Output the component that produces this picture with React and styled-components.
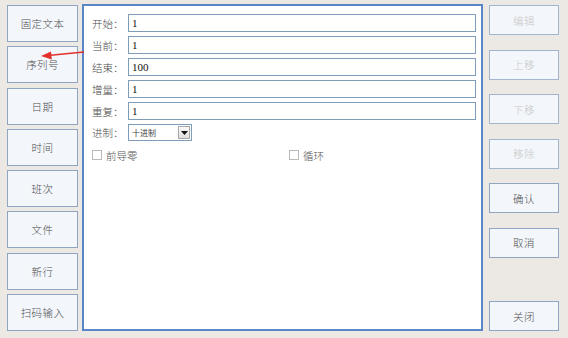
import React from "react";
import styled, { createGlobalStyle } from "styled-components";

const Global = createGlobalStyle`
  html, body { margin: 0; padding: 0; background: #ece9e4; }
  body { font-family: "Liberation Serif", "Noto Sans CJK SC", serif; }
  * { box-sizing: border-box; }
`;

const Page = styled.div`
  position: relative;
  width: 568px;
  height: 338px;
  display: flex;
  align-items: flex-start;
  padding: 5px 0 0 7px;
  background: #ece9e4;
`;

const LeftCol = styled.div`
  width: 71px;
  height: 326px;
  display: flex;
  flex-direction: column;
  justify-content: space-between;
`;

const SideButton = styled.button`
  height: ${(p) => p.$h}px;
  width: 100%;
  padding: 0;
  border: 1px solid ${(p) => (p.$disabled ? "#a3b6cf" : "#8fa5c2")};
  background: #f3f6fb;
  color: ${(p) => (p.$disabled ? "#c8c8c8" : "#505050")};
  font-family: "Noto Sans CJK SC", sans-serif;
  font-size: 10.5px;
  font-weight: 300;
  letter-spacing: 0.4px;
  display: flex;
  align-items: center;
  justify-content: center;
`;

const Panel = styled.div`
  margin-left: 4px;
  margin-top: -1px;
  width: 401px;
  height: 327px;
  border: 2px solid #5a86c6;
  background: #ffffff;
  padding: 8px 5px 0 8px;
  display: flex;
  flex-direction: column;
  gap: 4px;
`;

const Row = styled.div`
  display: flex;
  align-items: center;
  height: ${(p) => p.$h || 18}px;
`;

const Label = styled.span`
  width: 36px;
  font-family: "Noto Sans CJK SC", sans-serif;
  font-size: 10.5px;
  font-weight: 300;
  color: #4a4a4a;
  white-space: nowrap;
`;

const Field = styled.div`
  flex: 1;
  height: 18px;
  border: 1px solid #7f9db9;
  background: #fffffd;
  display: flex;
  align-items: center;
  padding-left: 3px;
  font-family: "Liberation Serif", serif;
  font-size: 11px;
  color: #111;
`;

const Select = styled.div`
  width: 64px;
  height: 17px;
  border: 1px solid #7f9db9;
  background: #fff;
  display: flex;
  align-items: stretch;
`;

const SelectText = styled.span`
  flex: 1;
  display: flex;
  align-items: center;
  padding-left: 3px;
  font-family: "Noto Sans CJK SC", sans-serif;
  font-size: 8px;
  color: #444;
`;

const SelectBtn = styled.span`
  width: 12px;
  margin: 1px;
  background: linear-gradient(#fafafa, #dedede);
  border: 1px solid #a8a8a8;
  display: flex;
  align-items: center;
  justify-content: center;
`;

const CheckRow = styled.div`
  display: flex;
  align-items: center;
  height: 18px;
  margin-top: 1px;
`;

const CheckItem = styled.label`
  display: flex;
  align-items: center;
  gap: 4px;
  width: ${(p) => p.$w || "auto"};
  font-family: "Noto Sans CJK SC", sans-serif;
  font-size: 10.5px;
  font-weight: 300;
  color: #555;
`;

const Box = styled.span`
  width: 10px;
  height: 10px;
  border: 1px solid #b9b9b9;
  background: #fff;
`;

const RightCol = styled.div`
  margin-left: 6px;
  width: 70px;
  height: 326px;
  display: flex;
  flex-direction: column;
  gap: 14.5px;
`;

const Spacer = styled.div`
  flex: 1;
`;

const Arrow = styled.svg`
  position: absolute;
  left: 38px;
  top: 47px;
`;

const leftItems = ["固定文本", "序列号", "日期", "时间", "班次", "文件", "新行", "扫码输入"];

const fields = [
  ["开始：", "1"],
  ["当前：", "1"],
  ["结束：", "100"],
  ["增量：", "1"],
  ["重复：", "1"],
];

export default function App() {
  return (
    <Page>
      <Global />
      <LeftCol>
        {leftItems.map((t) => (
          <SideButton key={t} $h={37}>{t}</SideButton>
        ))}
      </LeftCol>
      <Panel>
        {fields.map(([l, v]) => (
          <Row key={l}>
            <Label>{l}</Label>
            <Field>{v}</Field>
          </Row>
        ))}
        <Row $h={17}>
          <Label>进制：</Label>
          <Select>
            <SelectText>十进制</SelectText>
            <SelectBtn>
              <svg width="7" height="4" viewBox="0 0 7 4">
                <path d="M0 0 H7 L3.5 4 Z" fill="#111" />
              </svg>
            </SelectBtn>
          </Select>
        </Row>
        <CheckRow>
          <CheckItem $w="197px"><Box />前导零</CheckItem>
          <CheckItem><Box />循环</CheckItem>
        </CheckRow>
      </Panel>
      <RightCol>
        <SideButton $h={30} $disabled>编辑</SideButton>
        <SideButton $h={30} $disabled>上移</SideButton>
        <SideButton $h={30} $disabled>下移</SideButton>
        <SideButton $h={30} $disabled>移除</SideButton>
        <SideButton $h={30}>确认</SideButton>
        <SideButton $h={30}>取消</SideButton>
        <Spacer />
        <SideButton $h={30}>关闭</SideButton>
      </RightCol>
      <Arrow width="50" height="14" viewBox="0 0 50 14">
        <line x1="46" y1="5" x2="10" y2="8.5" stroke="#e2312b" strokeWidth="1.6" />
        <path d="M3 9 L13 4.5 L13.8 12.5 Z" fill="#e2312b" />
      </Arrow>
    </Page>
  );
}
